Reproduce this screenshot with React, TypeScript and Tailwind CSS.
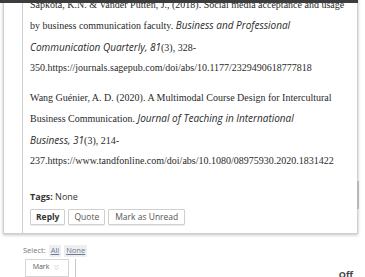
import { ChevronsDown } from 'lucide-react';

const serif = "font-['Liberation_Serif','Times_New_Roman',serif]";
const sans = "font-['Open_Sans','Noto_Sans',sans-serif]";

function Ref({ children }: { children: React.ReactNode }) {
  return <span className={`${sans} italic text-[10px]`}>{children}</span>;
}

export default function App() {
  return (
    <div className="relative h-[277px] w-[365px] overflow-hidden bg-white text-[#2a2a2a]">
      {/* header edge that overlaps scrolled content */}
      <div className="absolute left-0 top-0 z-10 h-[3px] w-[358px] bg-[#3d3d3d]" />

      {/* post card */}
      <div className="relative ml-[3px] mt-[-12px] flex w-[355px] border border-[#cfcfcf] bg-white shadow-[0_1px_3px_rgba(0,0,0,0.25)]">
        <div className="w-[19px] shrink-0 border-r border-[#cfcfcf]" />
        <div className="flex-1 pb-[8px] pl-[7px] pt-[6px]">
          <p className={`${serif} whitespace-nowrap text-[10px] leading-[20.3px]`}>
            Sapkota, K.N. &amp; Vander Putten, J., (2018). Social media acceptance and usage
            <br />
            by business communication faculty. <Ref>Business and Professional</Ref>
            <br />
            <Ref>Communication Quarterly, 81</Ref>(3), 328-
            <br />
            350.https://journals.sagepub.com/doi/abs/10.1177/2329490618777818
          </p>
          <p className={`${serif} mt-[10px] whitespace-nowrap text-[10px] leading-[20.3px]`}>
            Wang Guénier, A. D. (2020). A Multimodal Course Design for Intercultural
            <br />
            Business Communication. <Ref>Journal of Teaching in International</Ref>
            <br />
            <Ref>Business, 31</Ref>(3), 214-
            <br />
            237.https://www.tandfonline.com/doi/abs/10.1080/08975930.2020.1831422
          </p>

          <div className={`${sans} mt-[19px] text-[9px] leading-[14px] text-[#333]`}>
            <span className="font-bold">Tags:</span> None
          </div>

          <div className={`${sans} mt-[5px] flex gap-[3px] text-[8.5px] text-[#333]`}>
            <button className="h-[16px] rounded-[1px] border border-[#d0d0d0] px-[5px] font-bold leading-[14px] shadow-[0_1px_1px_rgba(0,0,0,0.08)]">
              Reply
            </button>
            <button className="h-[16px] rounded-[1px] border border-[#d0d0d0] px-[5px] leading-[14px] text-[#555] shadow-[0_1px_1px_rgba(0,0,0,0.08)]">
              Quote
            </button>
            <button className="h-[16px] rounded-[1px] border border-[#d0d0d0] px-[6px] leading-[14px] text-[#555] shadow-[0_1px_1px_rgba(0,0,0,0.08)]">
              Mark as Unread
            </button>
          </div>
        </div>

        {/* scrollbar thumb on the right edge */}
        <div className="absolute right-[-2px] top-[192px] h-[28px] w-[2px] bg-[#b8b8b8]" />
      </div>

      {/* select / mark toolbar */}
      <div className={`${sans} ml-[23px] mt-[11px] flex items-center gap-[3px] text-[7.5px] text-[#777]`}>
        <span>Select:</span>
        <span className="bg-[#eeeeee] px-[2px] text-[#6b7a99] underline">All</span>
        <span className="bg-[#eeeeee] px-[2px] text-[#6b7a99] underline">None</span>
      </div>
      <div className="ml-[25px] mt-[2px] flex items-start">
        <div className={`${sans} flex h-[18px] w-[44px] items-center justify-center gap-[3px] border border-[#d6d6d6] text-[7px] text-[#555]`}>
          Mark
          <ChevronsDown size={9} strokeWidth={1.5} className="text-[#b5b5b5]" />
        </div>
        <div className="ml-[6px] h-[24px] border-l border-[#c8c8c8]" />
      </div>

      <span className={`${sans} absolute bottom-[-4px] right-[12px] text-[9px] font-bold text-[#444]`}>Off</span>
    </div>
  );
}
